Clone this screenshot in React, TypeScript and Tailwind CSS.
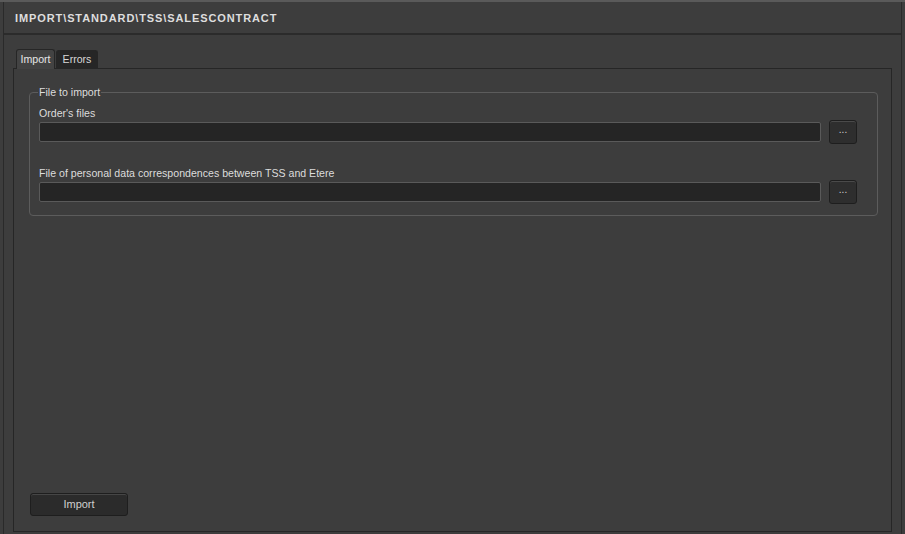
const groupFields = [
  { label: "Order's files" },
  { label: "File of personal data correspondences between TSS and Etere" },
];

function BrowseButton() {
  return (
    <button className="ml-[8px] flex h-[24px] w-[28px] items-center justify-center rounded-[3px] border border-[#1e1e1e] bg-[#2e2e2e] pb-[4px] text-[10px] leading-none text-[#cfcfcf] shadow-[inset_0_1px_0_#4a4a4a]">
      ...
    </button>
  );
}

export default function App() {
  return (
    <div
      className="h-[534px] w-[905px] overflow-hidden border-t-2 border-[#5a5a5a] bg-[#3d3d3d] px-[3px] text-[10.6px] text-[#dcdcdc]"
      style={{ fontFamily: '"Liberation Sans", Arial, sans-serif' }}
    >
      <div className="flex h-full flex-col border-l border-r border-[#2a2a2a]">
        {/* title bar */}
        <div className="flex h-[33px] shrink-0 items-center border-b-2 border-[#2b2b2b] pl-[11px] pt-[1px]">
          <span className="text-[11px] font-bold tracking-[0.9px] text-[#dedede]">
            IMPORT\STANDARD\TSS\SALESCONTRACT
          </span>
        </div>

        <div className="flex flex-1 flex-col pl-[9px] pr-[9px] pt-[14px]">
          {/* tabs */}
          <div className="flex items-end pl-[3px]">
            <div className="relative z-10 -mb-px flex h-[20px] w-[39px] items-center justify-center rounded-t-[3px] border border-b-0 border-[#262626] bg-[#434343] text-[#e6e6e6]">
              Import
            </div>
            <div className="ml-[1px] flex h-[18px] w-[42px] items-center justify-center rounded-t-[3px] border border-b-0 border-[#262626] bg-[#262626] text-[#d8d8d8]">
              Errors
            </div>
          </div>

          {/* tab panel */}
          <div className="mb-[2px] flex flex-1 flex-col border border-[#262626] pb-[15px] pl-[15px] pr-[13px] pt-[16px]">
            <fieldset className="rounded-[4px] border border-[#5c5c5c] pb-[11px] pl-[9px] pr-[20px] pt-[2px]">
              <legend className="ml-[-1px] px-[1px] text-[#dcdcdc]">File to import</legend>
              {groupFields.map((f, i) => (
                <div key={f.label} className={i > 0 ? "mt-[23px]" : "mt-[4px]"}>
                  <div className="leading-[13px]">{f.label}</div>
                  <div className="flex items-center">
                    <div className="h-[20px] flex-1 rounded-[2px] border border-[#5a5a5a] bg-[#252525]" />
                    <BrowseButton />
                  </div>
                </div>
              ))}
            </fieldset>

            <div className="flex-1" />

            <button className="ml-[1px] h-[23px] w-[98px] rounded-[3px] border border-[#1e1e1e] bg-[#2b2b2b] text-[11px] text-[#cfcfcf] shadow-[inset_0_1px_0_#464646]">
              Import
            </button>
          </div>
        </div>
      </div>
    </div>
  );
}
